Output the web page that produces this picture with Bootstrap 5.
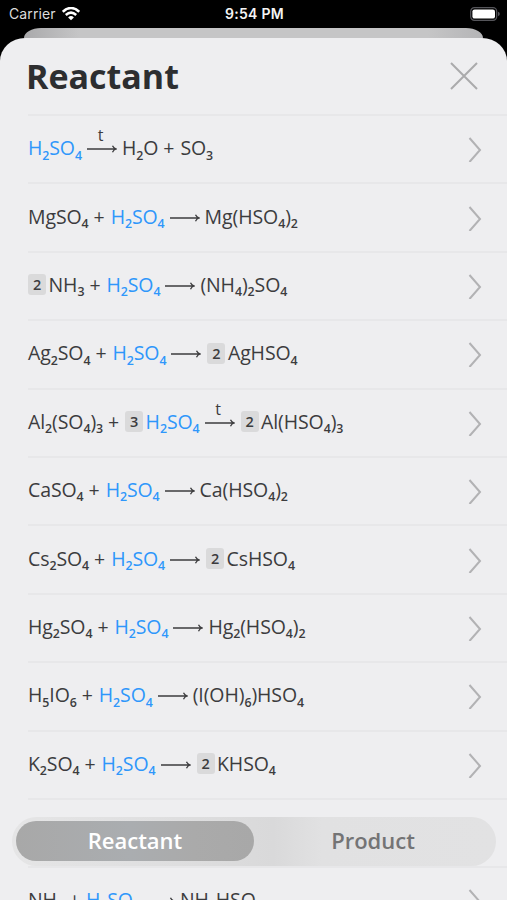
<!DOCTYPE html>
<html lang="en">
<head>
<meta charset="utf-8">
<meta name="viewport" content="width=device-width, initial-scale=1">
<title>Reactant</title>
<link href="https://cdn.jsdelivr.net/npm/bootstrap@5.3.0/dist/css/bootstrap.min.css" rel="stylesheet">
<style>
body{background:#000;font-family:"Open Sans","Noto Sans",sans-serif;color:#3c3c3e}
.screen{height:900px}
.status{height:28px;color:#f4f4f4;padding:0 7px 0 9px;font-family:Inter,sans-serif;line-height:28px}
.status .side{flex:1 1 0}
.carrier{font-size:14px;letter-spacing:.12px;color:#dcdcdc}
.wifi{margin-left:6px}
.clock{font-weight:600;font-size:14px;letter-spacing:.3px}
.behind{height:10px;margin:0 24px;background:linear-gradient(90deg,#a9a9ab,#c5c5c6 12%,#c5c5c6 88%,#b4b4b6);border-radius:17px 17px 0 0/10px 10px 0 0}
.sheet{height:862px;background:#eeeef0;border-radius:25px 25px 0 0/23px 23px 0 0}
.heading{height:76px;padding:0 29px 0 26px}
.heading h1{font-size:34px;font-weight:700;line-height:47px;color:#2d2e30}
.rows{margin-left:28px}
.reaction{height:68.4px;border-top:2px solid #e7e7e9;padding-right:25px}
.eq{font-size:19.5px;line-height:30px;white-space:nowrap;letter-spacing:-.1px;padding-bottom:2px}
.eq sub{font-size:12.4px;font-weight:600;bottom:-.35em;line-height:0}
.hit{color:#2e97fb}
.plus{margin:0 6px 0 5px}
.coef{width:18px;height:21px;border-radius:3px;background:#dadadb;font-size:14.5px;font-weight:600;line-height:21px;margin-right:2.5px}
.arrow{width:30px;margin:0 5px}
.arrow svg{display:block;margin-top:2px}
.cond{left:0;right:0;top:-18px;font-size:16px;line-height:20px;padding-right:3px}
.to-coef{margin-right:6px}
.switcher{left:12px;right:11px;top:817px;height:49px;border-radius:25px;padding:4px;background:linear-gradient(90deg,#e5e5e6 0,#dfdfe0 30%,#d9d9da 54%,#e1e1e2 64%,#e2e2e3)}
.switcher .btn{border:0;padding:0 0 2px;border-radius:20px;font-size:22px;font-weight:600;line-height:36px;height:40px;width:238px}
.switcher .picked{color:#fff;background:linear-gradient(90deg,#a8a8a8,#aaadb0 48%,#aaa 75%,#a8a8a8)}
.switcher .other{color:#747475}
</style>
<script src="https://cdn.jsdelivr.net/npm/bootstrap@5.3.0/dist/js/bootstrap.bundle.min.js"></script>
</head>
<body>
<div class="screen position-relative overflow-hidden">
  <div class="status d-flex align-items-center">
    <div class="side d-flex align-items-center"><span class="carrier">Carrier</span>
      <svg class="wifi" width="18" height="14" viewBox="0 0 18 14" fill="none" stroke="#fff" stroke-width="2.5"><path d="M.8 4.8Q9-2.8 17.2 4.8M3.8 8Q9 3.2 14.2 8"/><path d="M9 13.3L6.1 10.4Q9 7.8 11.9 10.4Z" fill="#fff" stroke="none"/></svg>
    </div>
    <span class="clock">9:54 PM</span>
    <div class="side d-flex justify-content-end">
      <svg width="30" height="14" viewBox="0 0 30 14"><rect x=".7" y=".7" width="26" height="12.6" rx="3.7" fill="none" stroke="#55555a" stroke-width="1.2"/><rect x="2.4" y="2.4" width="22.6" height="9.2" rx="2.2" fill="#fff"/><path d="M28 4.8Q29.8 5.4 29.8 7T28 9.2Z" fill="#55555a"/></svg>
    </div>
  </div>
  <div class="behind"></div>
  <main class="sheet">
    <header class="heading d-flex align-items-center justify-content-between">
      <h1 class="mb-0">Reactant</h1>
      <svg width="28" height="28" viewBox="0 0 28 28" stroke="#aaaaac" stroke-width="2"><path d="M1 1L27 27M27 1L1 27"/></svg>
    </header>
    <div class="rows" id="rows"></div>
  </main>
  <div class="switcher position-absolute d-flex">
    <button class="btn picked">Reactant</button>
    <button class="btn other">Product</button>
  </div>
</div>
<script>
// "t>" is an arrow with the heating condition; a leading "n " is a coefficient.
// An empty list is the gap that the floating switcher covers.
const reactions = [
  ["H2SO4", "t>", "H2O", "+", "SO3"],
  ["MgSO4", "+", "H2SO4", ">", "Mg(HSO4)2"],
  ["2 NH3", "+", "H2SO4", ">", "(NH4)2SO4"],
  ["Ag2SO4", "+", "H2SO4", ">", "2 AgHSO4"],
  ["Al2(SO4)3", "+", "3 H2SO4", "t>", "2 Al(HSO4)3"],
  ["CaSO4", "+", "H2SO4", ">", "Ca(HSO4)2"],
  ["Cs2SO4", "+", "H2SO4", ">", "2 CsHSO4"],
  ["Hg2SO4", "+", "H2SO4", ">", "Hg2(HSO4)2"],
  ["H5IO6", "+", "H2SO4", ">", "(I(OH)6)HSO4"],
  ["K2SO4", "+", "H2SO4", ">", "2 KHSO4"],
  [],
  ["NH3", "+", "H2SO4", ">", "NH4HSO4"]
];
function part(p, i, all) {
  if (p === "+") return '<span class="plus">+</span>';
  if (p.endsWith(">")) {
    const next = /^\d /.test(all[i + 1]) ? " to-coef" : "";
    return `<span class="arrow${next} position-relative">${p === "t>" ? '<span class="cond position-absolute text-center">t</span>' : ""}<svg width="30" height="8" viewBox="0 0 30 8" fill="none" stroke="#3c3c3e" stroke-width="1.3"><path d="M0 4H29M25.5 .8Q26.5 3.2 29.3 4Q26.5 4.8 25.5 7.2"/></svg></span>`;
  }
  const m = p.match(/^(?:(\d) )?(.*)$/);
  const coef = m[1] ? `<span class="coef text-center">${m[1]}</span>` : "";
  return coef + `<span class="${m[2] === "H2SO4" ? "hit" : ""}">${m[2].replace(/\d/g, "<sub>$&</sub>")}</span>`;
}
const chevron = '<svg width="14" height="26" viewBox="0 0 14 26" fill="none" stroke="#b2b2b4" stroke-width="2"><path d="M1.5 2L12 14L1.5 26"/></svg>';
document.getElementById("rows").innerHTML = reactions.map(r =>
  `<div class="reaction d-flex align-items-center justify-content-between">${r.length ? `<div class="eq d-flex align-items-center">${r.map(part).join("")}</div>${chevron}` : ""}</div>`).join("");
</script>
</body>
</html>
